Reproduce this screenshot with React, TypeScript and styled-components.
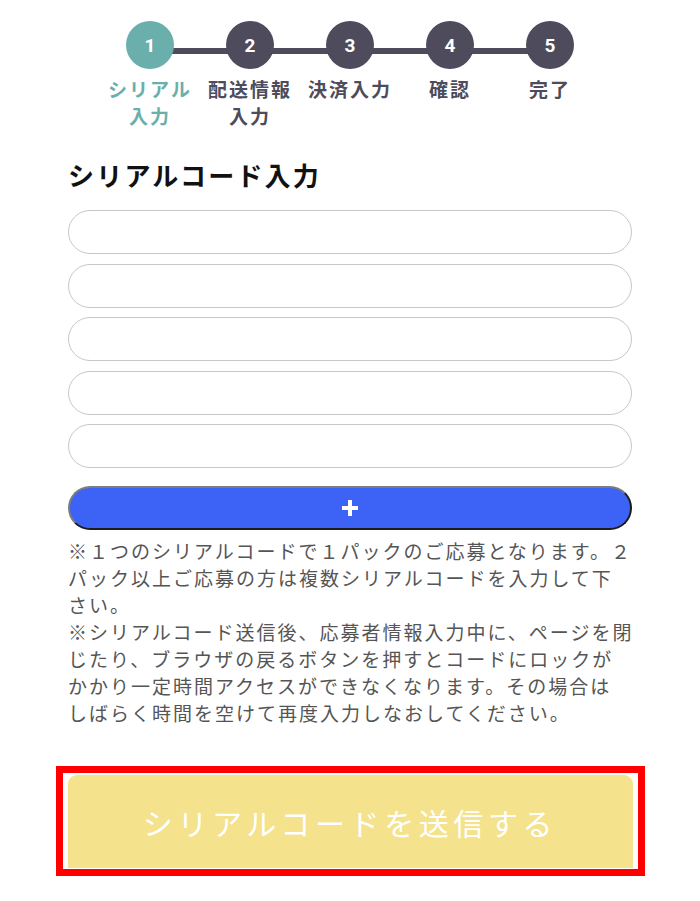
import React from 'react';
import styled, { createGlobalStyle } from 'styled-components';

const GlobalStyle = createGlobalStyle`
    html, body {
        margin: 0;
        padding: 0;
        background: #fff;
    }
    body {
        font-family: "Noto Sans CJK JP", "Noto Sans", sans-serif;
    }
`;

const Page = styled.div`
    width: 700px;
    display: flex;
    flex-direction: column;
    align-items: center;
    padding-top: 21px;
`;

const Stepper = styled.div`
    display: flex;
    width: 500px;
`;

const Step = styled.div`
    position: relative;
    width: 100px;
    display: flex;
    flex-direction: column;
    align-items: center;
`;

const Connector = styled.div`
    position: absolute;
    top: 27px;
    left: 50px;
    width: 100px;
    height: 6px;
    background: #4d4b5c;
`;

const Circle = styled.div<{ $active?: boolean }>`
    position: relative;
    z-index: 1;
    width: 48px;
    height: 48px;
    border-radius: 50%;
    background: ${props => (props.$active ? '#6bafad' : '#4d4b5c')};
    color: #fff;
    display: flex;
    align-items: center;
    justify-content: center;
    font-family: Roboto, "Noto Sans", sans-serif;
    font-weight: 700;
    font-size: 19px;
`;

const StepLabel = styled.div<{ $active?: boolean }>`
    margin-top: 6px;
    font-size: 19px;
    font-weight: 700;
    line-height: 27px;
    letter-spacing: 2px;
    text-align: center;
    white-space: nowrap;
    color: ${props => (props.$active ? '#6bafad' : '#4d4b5c')};
`;

const Form = styled.div`
    width: 564px;
    display: flex;
    flex-direction: column;
    margin-top: 28px;
`;

const Title = styled.h2`
    margin: 0 0 17px;
    font-size: 26px;
    font-weight: 700;
    line-height: 36px;
    letter-spacing: 2.2px;
    color: #111;
`;

const Inputs = styled.div`
    display: flex;
    flex-direction: column;
    gap: 9.5px;
`;

const SerialInput = styled.input`
    box-sizing: border-box;
    width: 100%;
    height: 44px;
    margin: 0;
    padding: 0 20px;
    border: 1px solid #c8c8c8;
    border-radius: 22px;
    background: #fff;
    font-size: 18px;
    outline: none;
`;

const AddButton = styled.button`
    box-sizing: border-box;
    width: 100%;
    height: 44px;
    margin-top: 18px;
    padding: 0;
    border: 2px solid;
    border-color: #7d7d7d #1c1c1c #1c1c1c #7d7d7d;
    border-radius: 22px;
    background: #3d63f6;
    display: flex;
    align-items: center;
    justify-content: center;
    cursor: pointer;
`;

const Notes = styled.p`
    margin: 7px 0 0;
    font-size: 19px;
    line-height: 27px;
    letter-spacing: 2px;
    color: #555;
    white-space: nowrap;
`;

const SubmitFrame = styled.div`
    margin-top: 40px;
    width: 565px;
    padding: 2px 5px 1px 5px;
    border: 7px solid #ff0000;
    box-sizing: content-box;
`;

const SubmitButton = styled.button`
    width: 100%;
    height: 93px;
    display: block;
    border: none;
    border-radius: 9px 9px 0 0;
    background: #f5e28c;
    color: #fff;
    font-family: "Noto Sans CJK JP", "Noto Sans", sans-serif;
    font-size: 30px;
    letter-spacing: 4.6px;
    padding: 0;
    cursor: pointer;
`;

const steps = [
    { no: 1, label: ['シリアル', '入力'] },
    { no: 2, label: ['配送情報', '入力'] },
    { no: 3, label: ['決済入力'] },
    { no: 4, label: ['確認'] },
    { no: 5, label: ['完了'] },
];

const PlusIcon = () => (
    <svg width="16" height="16" viewBox="0 0 16 16">
        <rect x="6" y="0" width="4" height="16" fill="#fff" />
        <rect x="0" y="6" width="16" height="4" fill="#fff" />
    </svg>
);

const App: React.FunctionComponent = () => (
    <>
        <GlobalStyle />
        <Page>
            <Stepper>
                {steps.map((step, i) => (
                    <Step key={step.no}>
                        {i < steps.length - 1 && <Connector />}
                        <Circle $active={i === 0}>{step.no}</Circle>
                        <StepLabel $active={i === 0}>
                            {step.label.map((line, j) => (
                                <div key={j}>{line}</div>
                            ))}
                        </StepLabel>
                    </Step>
                ))}
            </Stepper>

            <Form>
                <Title>シリアルコード入力</Title>
                <Inputs>
                    {[0, 1, 2, 3, 4].map(n => (
                        <SerialInput key={n} type="text" />
                    ))}
                </Inputs>
                <AddButton type="button">
                    <PlusIcon />
                </AddButton>
                <Notes>
                    ※１つのシリアルコードで１パックのご応募となります。２
                    <br />
                    パック以上ご応募の方は複数シリアルコードを入力して下
                    <br />
                    さい。
                    <br />
                    ※シリアルコード送信後、応募者情報入力中に、ページを閉
                    <br />
                    じたり、ブラウザの戻るボタンを押すとコードにロックが
                    <br />
                    かかり一定時間アクセスができなくなります。その場合は
                    <br />
                    しばらく時間を空けて再度入力しなおしてください。
                </Notes>
            </Form>

            <SubmitFrame>
                <SubmitButton type="button">シリアルコードを送信する</SubmitButton>
            </SubmitFrame>
        </Page>
    </>
);

export default App;
